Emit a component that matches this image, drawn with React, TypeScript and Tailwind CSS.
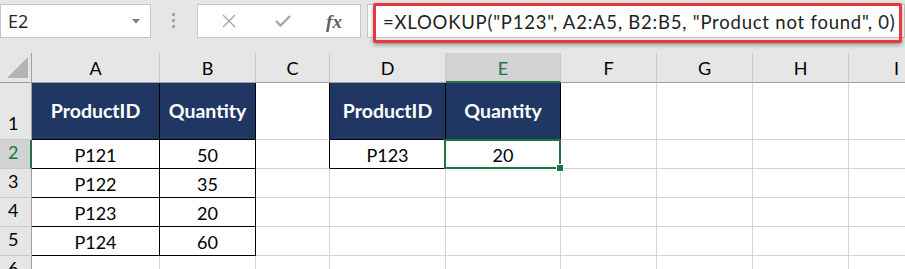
import React from 'react';

type Kind = 'head' | 'data' | 'empty';

interface CellInfo {
  text?: string;
  kind: Kind;
}

const cols = ['A', 'B', 'C', 'D', 'E', 'F', 'G', 'H', 'I'];
const rows = [1, 2, 3, 4, 5, 6];

const cells: Record<string, CellInfo> = {
  A1: { text: 'ProductID', kind: 'head' },
  B1: { text: 'Quantity', kind: 'head' },
  A2: { text: 'P121', kind: 'data' },
  B2: { text: '50', kind: 'data' },
  A3: { text: 'P122', kind: 'data' },
  B3: { text: '35', kind: 'data' },
  A4: { text: 'P123', kind: 'data' },
  B4: { text: '20', kind: 'data' },
  A5: { text: 'P124', kind: 'data' },
  B5: { text: '60', kind: 'data' },
  D1: { text: 'ProductID', kind: 'head' },
  E1: { text: 'Quantity', kind: 'head' },
  D2: { text: 'P123', kind: 'data' },
  E2: { text: '20', kind: 'data' },
};

const formula = '=XLOOKUP("P123", A2:A5, B2:B5, "Product not found", 0)';

const NameBox: React.FC = () => (
  <div className="mt-[4px] flex h-[34px] w-[151px] items-center justify-between border border-[#c6c6c6] bg-white pl-[7px] pr-[10px]">
    <span className="font-['Open_Sans',sans-serif] text-[18px] text-[#222]">E2</span>
    <svg width="8" height="5" viewBox="0 0 8 5">
      <path d="M0 0h8L4 4.5z" fill="#7a7a7a" />
    </svg>
  </div>
);

const FormulaButtons: React.FC = () => (
  <div className="ml-[22px] mt-[4px] flex h-[34px] w-[164px] items-center border border-[#c6c6c6] bg-white">
    <div className="flex w-[60px] justify-center pl-[2px]">
      <svg width="14" height="14" viewBox="0 0 14 14">
        <path d="M1 1l12 12M13 1L1 13" stroke="#a8a8a8" strokeWidth="1.4" fill="none" />
      </svg>
    </div>
    <div className="flex w-[50px] justify-center">
      <svg width="16" height="12" viewBox="0 0 16 12">
        <path d="M1 6l4.5 4.5L15 1" stroke="#a8a8a8" strokeWidth="2.4" fill="none" />
      </svg>
    </div>
    <div className="flex w-[52px] justify-center">
      <span className="font-['Liberation_Serif',serif] text-[19px] font-bold italic leading-none text-[#5f5f5f]">
        fx
      </span>
    </div>
  </div>
);

const Toolbar: React.FC = () => (
  <div className="flex h-[53px] items-start">
    <NameBox />
    <div className="ml-[21px] mt-[13px] flex w-[3px] flex-col gap-[3px]">
      <span className="h-[3px] w-[3px] bg-[#a9a9a9]" />
      <span className="h-[3px] w-[3px] bg-[#a9a9a9]" />
      <span className="h-[3px] w-[3px] bg-[#a9a9a9]" />
    </div>
    <FormulaButtons />
    <div className="relative ml-[6px] mt-[4px] h-[34px] flex-1 border border-[#c6c6c6] bg-white">
      <div className="absolute left-[5px] top-[-2px] flex h-[40px] w-[529px] items-center rounded-[2px] border-[3px] border-[#e8393e] pl-[7px] shadow-[0_2px_4px_rgba(0,0,0,0.35)]">
        <span className="whitespace-nowrap font-['Lato',sans-serif] text-[18.5px] tracking-[0.78px] text-[#222]">
          {formula}
        </span>
      </div>
    </div>
  </div>
);

const blackBox = (key: string) => {
  const c = key[0];
  const r = Number(key.slice(1));
  if ((c === 'A' || c === 'B') && r <= 5) return { right: true, bottom: true };
  if ((c === 'D' || c === 'E') && r <= 2) return { right: true, bottom: true };
  if (c === 'C' && r <= 2) return { right: true, bottom: false };
  return { right: false, bottom: false };
};

const Cell: React.FC<{ id: string }> = ({ id }) => {
  const info = cells[id] ?? { kind: 'empty' as Kind };
  const b = blackBox(id);
  const selected = id === 'E2';
  return (
    <div
      className={[
        'relative flex items-center justify-center border-r border-b',
        b.right ? 'border-r-black' : 'border-r-[#d4d4d4]',
        b.bottom ? 'border-b-black' : 'border-b-[#d4d4d4]',
        info.kind === 'head'
          ? "bg-[#203764] font-['Lato',sans-serif] text-[19.5px] font-bold text-white"
          : "bg-white font-['Lato',sans-serif] text-[18px] text-black",
        info.kind === 'data' ? 'pt-[3px]' : '',
        selected ? 'z-10' : '',
      ].join(' ')}
    >
      {info.text}
      {selected && (
        <div className="absolute -bottom-[1px] -left-[2px] -right-[1px] -top-[1px] border-2 border-[#217346]">
          <span className="absolute -bottom-[5px] -right-[5px] h-[8px] w-[8px] border border-white bg-[#217346]" />
        </div>
      )}
    </div>
  );
};

const Sheet: React.FC = () => (
  <div className="grid grid-cols-[32px_128px_96px_74px_116px_115px_96px_96px_96px_96px] grid-rows-[30px_57px_29px_29px_29px_29px_29px]">
    <div className="relative border-r border-b border-r-[#9e9e9e] border-b-[#9e9e9e] bg-[#e6e6e6]">
      <svg className="absolute bottom-[4px] right-[3px]" width="21" height="21" viewBox="0 0 21 21">
        <path d="M21 0V21H0z" fill="#b4b4b4" />
      </svg>
    </div>
    {cols.map((c) => (
      <div
        key={c}
        className={
          c === 'E'
            ? "flex items-center justify-center border-r border-b-2 border-r-[#c8c8c8] border-b-[#217346] bg-[#d2d2d2] pt-[2px] font-['Lato',sans-serif] text-[18px] text-[#217346]"
            : "flex items-center justify-center border-r border-b border-r-[#c8c8c8] border-b-[#9e9e9e] bg-[#e6e6e6] pt-[2px] font-['Lato',sans-serif] text-[18px] text-black"
        }
      >
        {c}
      </div>
    ))}
    {rows.map((r) => (
      <React.Fragment key={r}>
        <div
          className={
            r === 2
              ? "flex items-end border-r-2 border-b border-r-[#217346] border-b-[#c8c8c8] bg-[#d2d2d2] pb-[2px] pl-[8px] font-['Lato',sans-serif] text-[18px] text-[#217346]"
              : "flex items-end border-r border-b border-r-[#9e9e9e] border-b-[#c8c8c8] bg-[#e6e6e6] pb-[2px] pl-[8px] font-['Lato',sans-serif] text-[18px] text-black"
          }
        >
          {r}
        </div>
        {cols.map((c) => (
          <Cell key={c + r} id={c + r} />
        ))}
      </React.Fragment>
    ))}
  </div>
);

const App: React.FC = () => (
  <div className="h-[269px] w-[905px] overflow-hidden bg-[#e6e6e6]">
    <Toolbar />
    <Sheet />
  </div>
);

export default App;
